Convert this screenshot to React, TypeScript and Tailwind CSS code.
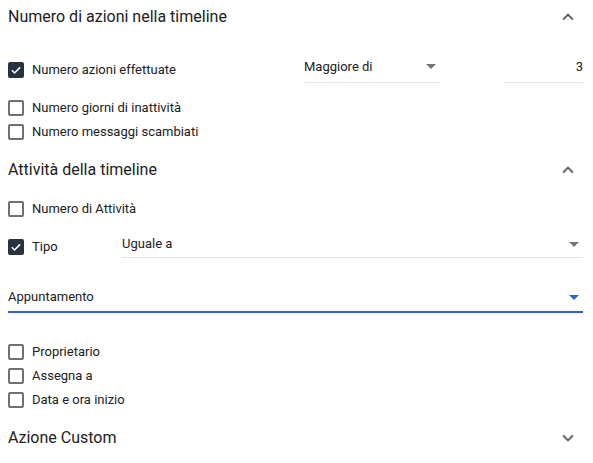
import type { ReactNode } from "react";

const FONT = { fontFamily: "Roboto, 'Noto Sans', Arial, sans-serif" };

function Chevron({ up }: { up?: boolean }) {
  return (
    <svg viewBox="0 0 24 24" className="h-[22px] w-[22px] text-[#616161]" fill="currentColor" aria-hidden>
      {up ? (
        <path d="M7.41 15.41 12 10.83l4.59 4.58L18 14l-6-6-6 6z" />
      ) : (
        <path d="M7.41 8.59 12 13.17l4.59-4.58L18 10l-6 6-6-6z" />
      )}
    </svg>
  );
}

function Caret({ blue }: { blue?: boolean }) {
  return (
    <svg viewBox="0 0 10 5" className={`h-[5px] w-[10px] ${blue ? "text-[#2f62d1]" : "text-[#757575]"}`} fill="currentColor" aria-hidden>
      <path d="M0 0h10L5 5z" />
    </svg>
  );
}

function Checkbox({ checked }: { checked?: boolean }) {
  return checked ? (
    <span className="flex h-4 w-4 shrink-0 items-center justify-center rounded-[2px] bg-[#27333f]">
      <svg viewBox="0 0 24 24" className="h-[14px] w-[14px]" fill="none" stroke="white" strokeWidth="2.6" aria-hidden>
        <path d="M5 12.5l4.5 4.5L19 7.5" />
      </svg>
    </span>
  ) : (
    <span className="h-4 w-4 shrink-0 rounded-[2px] border-2 border-[#707070]" />
  );
}

function CheckRow({ label, checked, className = "" }: { label: string; checked?: boolean; className?: string }) {
  return (
    <div className={`flex h-6 items-center gap-[8px] ${className}`}>
      <Checkbox checked={checked} />
      <span className="text-[13px] text-[#212121]">{label}</span>
    </div>
  );
}

function SectionHeader({ title, open, className = "" }: { title: string; open?: boolean; className?: string }) {
  return (
    <div className={`flex h-[34px] items-center justify-between pr-[4px] ${className}`}>
      <span className="text-[16px] text-[#212121]">{title}</span>
      <Chevron up={open} />
    </div>
  );
}

function Field({ children, className = "", blue }: { children: ReactNode; className?: string; blue?: boolean }) {
  return (
    <div
      className={`flex items-center justify-between text-[13px] text-[#212121] ${
        blue ? "border-b-2 border-[#2f62d1]" : "border-b border-[#e4e4e4]"
      } ${className}`}
    >
      {children}
    </div>
  );
}

export default function App() {
  return (
    <div className="h-[463px] w-[593px] overflow-hidden bg-white pl-[8px] pr-[10px]" style={FONT}>
      <SectionHeader title="Numero di azioni nella timeline" open />

      {/* Numero azioni effettuate + operator + value */}
      <div className="mt-[18px] flex h-[36px] items-center">
        <div className="flex w-[296px] items-center gap-[8px]">
          <Checkbox checked />
          <span className="text-[13px] text-[#212121]">Numero azioni effettuate</span>
        </div>
        <Field className="h-[26px] w-[136px] pb-[6px] pr-[4px]">
          <span>Maggiore di</span>
          <Caret />
        </Field>
        <div className="flex-1" />
        <Field className="h-[26px] w-[79px] pb-[6px]">
          <span />
          <span>3</span>
        </Field>
      </div>

      <CheckRow label="Numero giorni di inattività" className="mt-[8px]" />
      <CheckRow label="Numero messaggi scambiati" />

      <SectionHeader title="Attività della timeline" open className="mt-[9px]" />

      <CheckRow label="Numero di Attività" className="mt-[10px]" />

      {/* Tipo + operator */}
      <div className="mt-[8px] flex h-[36px] items-center">
        <div className="flex w-[114px] items-center gap-[8px]">
          <Checkbox checked />
          <span className="text-[13px] text-[#212121]">Tipo</span>
        </div>
        <Field className="-mt-[2px] h-[24px] flex-1 pb-[3px] pr-[4px]">
          <span>Uguale a</span>
          <Caret />
        </Field>
      </div>

      <Field blue className="mt-[18px] h-[30px] pr-[4px]">
        <span>Appuntamento</span>
        <Caret blue />
      </Field>

      <CheckRow label="Proprietario" className="mt-[27px]" />
      <CheckRow label="Assegna a" />
      <CheckRow label="Data e ora inizio" />

      <SectionHeader title="Azione Custom" className="mt-[9px]" />
    </div>
  );
}
